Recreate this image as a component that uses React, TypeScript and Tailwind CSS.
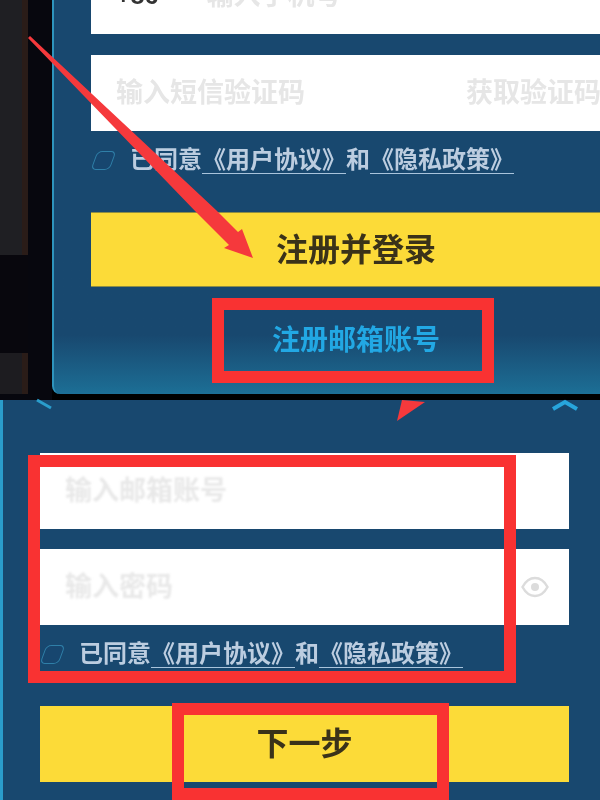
const font = "font-['Liberation_Sans','Noto_Sans_CJK_SC',sans-serif]";

const Agreement = ({ className }: { className: string }) => (
  <div className={`flex items-center ${className}`}>
    <span className="block h-[19px] w-[19px] -skew-x-[20deg] rounded-[5px] border border-[#2f7fa8] bg-[#17466f]" />
    <p className="ml-[17px] whitespace-nowrap text-[24px] leading-[30px] font-bold text-[#bccde0] blur-[0.6px]">
      已同意
      <span className="border-b border-[#a9c4dc]">《用户协议》</span>
      和
      <span className="border-b border-[#a9c4dc]">《隐私政策》</span>
    </p>
  </div>
);

const TopCard = () => (
  <div className="flex h-[400px] bg-black">
    {/* dim game scene behind the dialog */}
    <div className="flex w-[52px] shrink-0 flex-col bg-[#07070e]">
      <div className="h-[255px] w-[28px] border-r-[6px] border-[#2a1c18] bg-[#1f1f23]" />
      <div className="h-[98px] w-[28px] bg-[#08070d]" />
      <div className="h-[41px] w-[28px] border-r-[6px] border-[#2a1c18] bg-[#1d1c20]" />
    </div>
    {/* dialog runs past the right edge of the picture */}
    <div className="flex h-[394px] flex-1 flex-col justify-end overflow-hidden rounded-bl-lg border-l-2 border-[#2e94bd] bg-gradient-to-b from-[#18486f] from-85% to-[#1c6f96] pb-[32px] pl-[37px]">
      <div className="flex w-[530px] flex-col">
        <div className="flex h-[76px] shrink-0 items-center bg-white pl-[25px] text-[27px] font-bold text-[#e6e6e6]">
          <span className="mr-[48px] text-[25px] text-[#333333] blur-[0.4px]">+86</span>
          <span className="blur-[0.7px]">输入手机号</span>
        </div>
        <div className="mt-[21px] flex h-[76px] shrink-0 items-center justify-between bg-white pr-[20px] pl-[25px] text-[27px] font-bold text-[#e6e6e6]">
          <span className="blur-[0.7px]">输入短信验证码</span>
          <span className="blur-[0.7px]">获取验证码</span>
        </div>
        <Agreement className="mt-[14px] h-[30px] pl-[3px]" />
        <div className="mt-[37px] flex h-[75px] shrink-0 items-center justify-center border-y border-[#8d8d45] bg-[#fcdb38] text-[32px] font-bold text-[#3a3219]">
          <span className="blur-[0.3px]">注册并登录</span>
        </div>
        <div className="mt-[33px] flex h-[42px] shrink-0 items-center justify-center text-[28px] leading-none font-bold text-[#22a8e4]">
          <span className="blur-[0.4px]">注册邮箱账号</span>
        </div>
      </div>
    </div>
  </div>
);

const BottomCard = () => (
  <div className="flex h-[400px] flex-col border-l-[3px] border-[#2a9dcc] bg-[#18486f] pt-[53px] pr-[31px] pl-[37px]">
    <div className="flex h-[76px] shrink-0 items-center bg-white pl-[25px] text-[27px] font-bold text-[#e8e8e8]">
      <span className="blur-[0.8px]">输入邮箱账号</span>
    </div>
    <div className="mt-5 flex h-[76px] shrink-0 items-center justify-between bg-white pr-[20px] pl-[25px] text-[27px] font-bold text-[#e8e8e8]">
      <span className="blur-[0.8px]">输入密码</span>
      <svg className="blur-[0.4px]" width="28" height="22" viewBox="0 0 28 22" fill="none">
        <path d="M1.500 11C5 4.500 9.500 2 14 2s9 2.500 12.500 9C23 17.500 18.500 20 14 20S5 17.500 1.500 11Z" stroke="#dcdcdc" strokeWidth="2.500" />
        <circle cx="14" cy="11" r="4" fill="#dcdcdc" />
      </svg>
    </div>
    <Agreement className="mt-[14px] h-[30px] pl-[3px]" />
    <div className="mt-[37px] flex h-[76px] shrink-0 items-center justify-center bg-[#fcdb38] text-[32px] font-bold text-[#3a3219]">
      <span className="blur-[0.3px]">下一步</span>
    </div>
  </div>
);

export default function App() {
  return (
    <div className={`relative h-[800px] w-[600px] overflow-hidden bg-black ${font}`}>
      <TopCard />
      <BottomCard />

      {/* tutorial annotations drawn over the screenshots */}
      <span className="absolute top-[298px] left-[212px] h-[85px] w-[282px] border-[12px] border-[#f93232]" />
      <span className="absolute top-[455px] left-[28px] h-[228px] w-[488px] border-[12px] border-[#f93232]" />
      <span className="absolute top-[703px] left-[172px] h-[97px] w-[277px] border-[12px] border-[#f93232]" />
      <svg className="absolute top-0 left-0" width="600" height="800" viewBox="0 0 600 800" fill="none">
        <path d="M28 38 L30 36 L216 210 L238 232 L242 229 L253 258 L224 248 L229 245 L197 213 Z" fill="#f5393c" />
        <path d="M397 421 L425 402 L402 400 Z" fill="#f5393c" />
        <path d="M37 400 L51 408" stroke="#2a9dcc" strokeWidth="3" />
        <path d="M553 409 L565 402 L577 409" stroke="#27a5dc" strokeWidth="4" />
      </svg>
    </div>
  );
}
